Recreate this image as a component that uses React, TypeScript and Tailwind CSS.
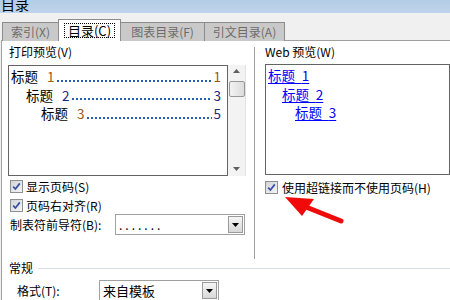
import React from 'react';

function Check() {
  return (
    <span className="inline-flex w-[13px] h-[13px] shrink-0 items-center justify-center border border-[#8e8f8f] bg-gradient-to-br from-[#d2d4d8] to-[#f4f5f7]">
      <svg width="9" height="9" viewBox="0 0 9 9">
        <path d="M1.2 4.6 L3.4 7 L7.8 1.4" stroke="#3a4ea0" strokeWidth="1.7" fill="none" />
      </svg>
    </span>
  );
}

function DropButton() {
  return (
    <span className="flex w-[15px] h-[17px] my-[1px] mr-[1px] items-center justify-center border border-[#9a9a9a] bg-gradient-to-b from-[#f6f6f6] to-[#d8d8d8]">
      <svg width="7" height="4" viewBox="0 0 7 4">
        <path d="M0 0 H7 L3.5 4 Z" fill="#000" />
      </svg>
    </span>
  );
}

function TocLine({ indent, num, page, numColor, pageColor }: { indent: string; num: string; page: string; numColor: string; pageColor: string }) {
  return (
    <div className={`flex items-center h-[18.5px] pr-[6px] ${indent}`}>
      <span className="text-black">标题</span>
      <span className={`ml-[9px] ${numColor}`}>{num}</span>
      <span className="flex-1 h-[2px] mt-[9px] mx-[2px] bg-[repeating-linear-gradient(90deg,#2360b4_0_2px,transparent_2px_4px)]" />
      <span className={pageColor}>{page}</span>
    </div>
  );
}

export default function App() {
  return (
    <div className="relative w-[450px] h-[300px] overflow-hidden bg-[#f0f0f0] text-black font-['Noto_Sans_CJK_SC',sans-serif]">
      {/* title bar, cut off at the top */}
      <div className="h-[13px] overflow-hidden bg-gradient-to-b from-[#b4cce6] to-[#bfd4eb]">
        <div className="mt-[-4px] pl-[1px] text-[14px] leading-[16px]">目录</div>
      </div>
      <div className="h-[6px]" />

      {/* tabs */}
      <div className="relative z-10 flex h-[22px] items-end pl-[2px] text-[12px]">
        <div className="flex w-[56px] h-[19px] items-center justify-center border-t border-l border-[#8c8c8c] bg-[#c9c9c9] text-[#6c6c6c]">
          索引(X)
        </div>
        <div className="flex w-[63px] h-[22px] items-center justify-center border-t border-l border-r border-[#8c8c8c] bg-white text-[13px]">
          <span className="border border-dotted border-black px-[3px] leading-[13px]">目录(C)</span>
        </div>
        <div className="flex w-[83px] h-[19px] items-center justify-center border-t border-[#8c8c8c] bg-[#c9c9c9] text-[#6c6c6c]">
          图表目录(F)
        </div>
        <div className="flex w-[81px] h-[19px] items-center justify-center border-t border-l border-r border-[#8c8c8c] bg-[#c9c9c9] text-[#6c6c6c]">
          引文目录(A)
        </div>
      </div>

      {/* tab panel */}
      <div className="ml-[1px] mt-[-1px] h-[300px] border-t border-l border-[#a0a0a0] bg-white text-[12px]">
        <div className="flex h-[219px]">
          {/* print preview */}
          <div className="w-[246px] pl-[6px]">
            <div className="mt-[4px] pl-[1px] leading-[14px]">打印预览(V)</div>
            <div className="mt-[6px] flex h-[111px]">
              <div className="w-[220px] border border-[#646464] pt-[1px] text-[13.5px]">
                <TocLine indent="pl-[2px]" num="1" page="1" numColor="text-[#9c5a14]" pageColor="text-[#9c5a14]" />
                <TocLine indent="pl-[17px]" num="2" page="3" numColor="text-[#182a78]" pageColor="text-[#182a78]" />
                <TocLine indent="pl-[32px]" num="3" page="5" numColor="text-[#9c5a14]" pageColor="text-[#182a78]" />
              </div>
              <div className="flex w-[18px] flex-col items-center border-r border-[#e2e2e2] bg-[#f3f3f3]">
                <svg className="mt-[4px]" width="7" height="4" viewBox="0 0 7 4">
                  <path d="M3.5 0 L7 4 H0 Z" fill="#606060" />
                </svg>
                <div className="mt-[8px] w-[16px] h-[16px] rounded-[2px] border border-[#979797] bg-gradient-to-r from-[#f2f2f2] to-[#dcdcdc]" />
                <div className="flex-1" />
                <svg className="mb-[5px]" width="7" height="4" viewBox="0 0 7 4">
                  <path d="M0 0 H7 L3.5 4 Z" fill="#606060" />
                </svg>
              </div>
            </div>
            <div className="mt-[4px] flex h-[13px] items-center gap-[3px] pl-[2px]">
              <Check />
              <span>显示页码(S)</span>
            </div>
            <div className="mt-[6px] flex h-[13px] items-center gap-[3px] pl-[2px]">
              <Check />
              <span>页码右对齐(R)</span>
            </div>
            <div className="mt-[2px] flex items-center pl-[2px]">
              <span className="w-[105px]">制表符前导符(B):</span>
              <div className="flex w-[130px] h-[21px] items-center border border-[#a0a0a0] bg-white">
                <span className="flex-1 pl-[3px] tracking-[3px] leading-[12px]">.......</span>
                <DropButton />
              </div>
            </div>
          </div>

          {/* separator */}
          <div className="ml-[6px] mt-[6px] h-[212px] w-px bg-[#a0a0a0]" />

          {/* web preview */}
          <div className="flex-1 pl-[10px]">
            <div className="mt-[4px] leading-[14px]">Web 预览(W)</div>
            <div className="mt-[5px] h-[111px] border border-[#646464] pt-[1px] text-[13.5px] text-[#0000ff]">
              <div className="h-[18.5px] pl-[2px] leading-[18.5px]">
                <span className="underline underline-offset-[2px]">标题{'\u2002'}1</span>
              </div>
              <div className="h-[18.5px] pl-[16px] leading-[18.5px]">
                <span className="underline underline-offset-[2px]">标题{'\u2002'}2</span>
              </div>
              <div className="h-[18.5px] pl-[29px] leading-[18.5px]">
                <span className="underline underline-offset-[2px]">标题{'\u2002'}3</span>
              </div>
            </div>
            <div className="mt-[6px] flex h-[13px] items-center gap-[4px]">
              <Check />
              <span>使用超链接而不使用页码(H)</span>
            </div>
          </div>
        </div>

        {/* general group */}
        <div className="mt-[1px] flex h-[14px] items-center pl-[7px]">
          <span className="leading-[14px]">常规</span>
          <div className="ml-[5px] h-px flex-1 bg-[#d5dfe5]" />
        </div>
        <div className="mt-[5px] flex items-center pl-[15px]">
          <span className="w-[82px]">格式(T):</span>
          <div className="flex w-[120px] h-[21px] items-center border border-[#a0a0a0] bg-white">
            <span className="flex-1 pl-[3px] text-[13px]">来自模板</span>
            <DropButton />
          </div>
        </div>
      </div>

      {/* red annotation arrow */}
      <svg className="pointer-events-none absolute left-0 top-0" width="450" height="300" viewBox="0 0 450 300">
        <path d="M306 207 L341 221" stroke="#f00a0a" strokeWidth="5" strokeLinecap="round" />
        <path d="M285 197 L314 199 L302 216 Z" fill="#f00a0a" />
      </svg>
    </div>
  );
}
